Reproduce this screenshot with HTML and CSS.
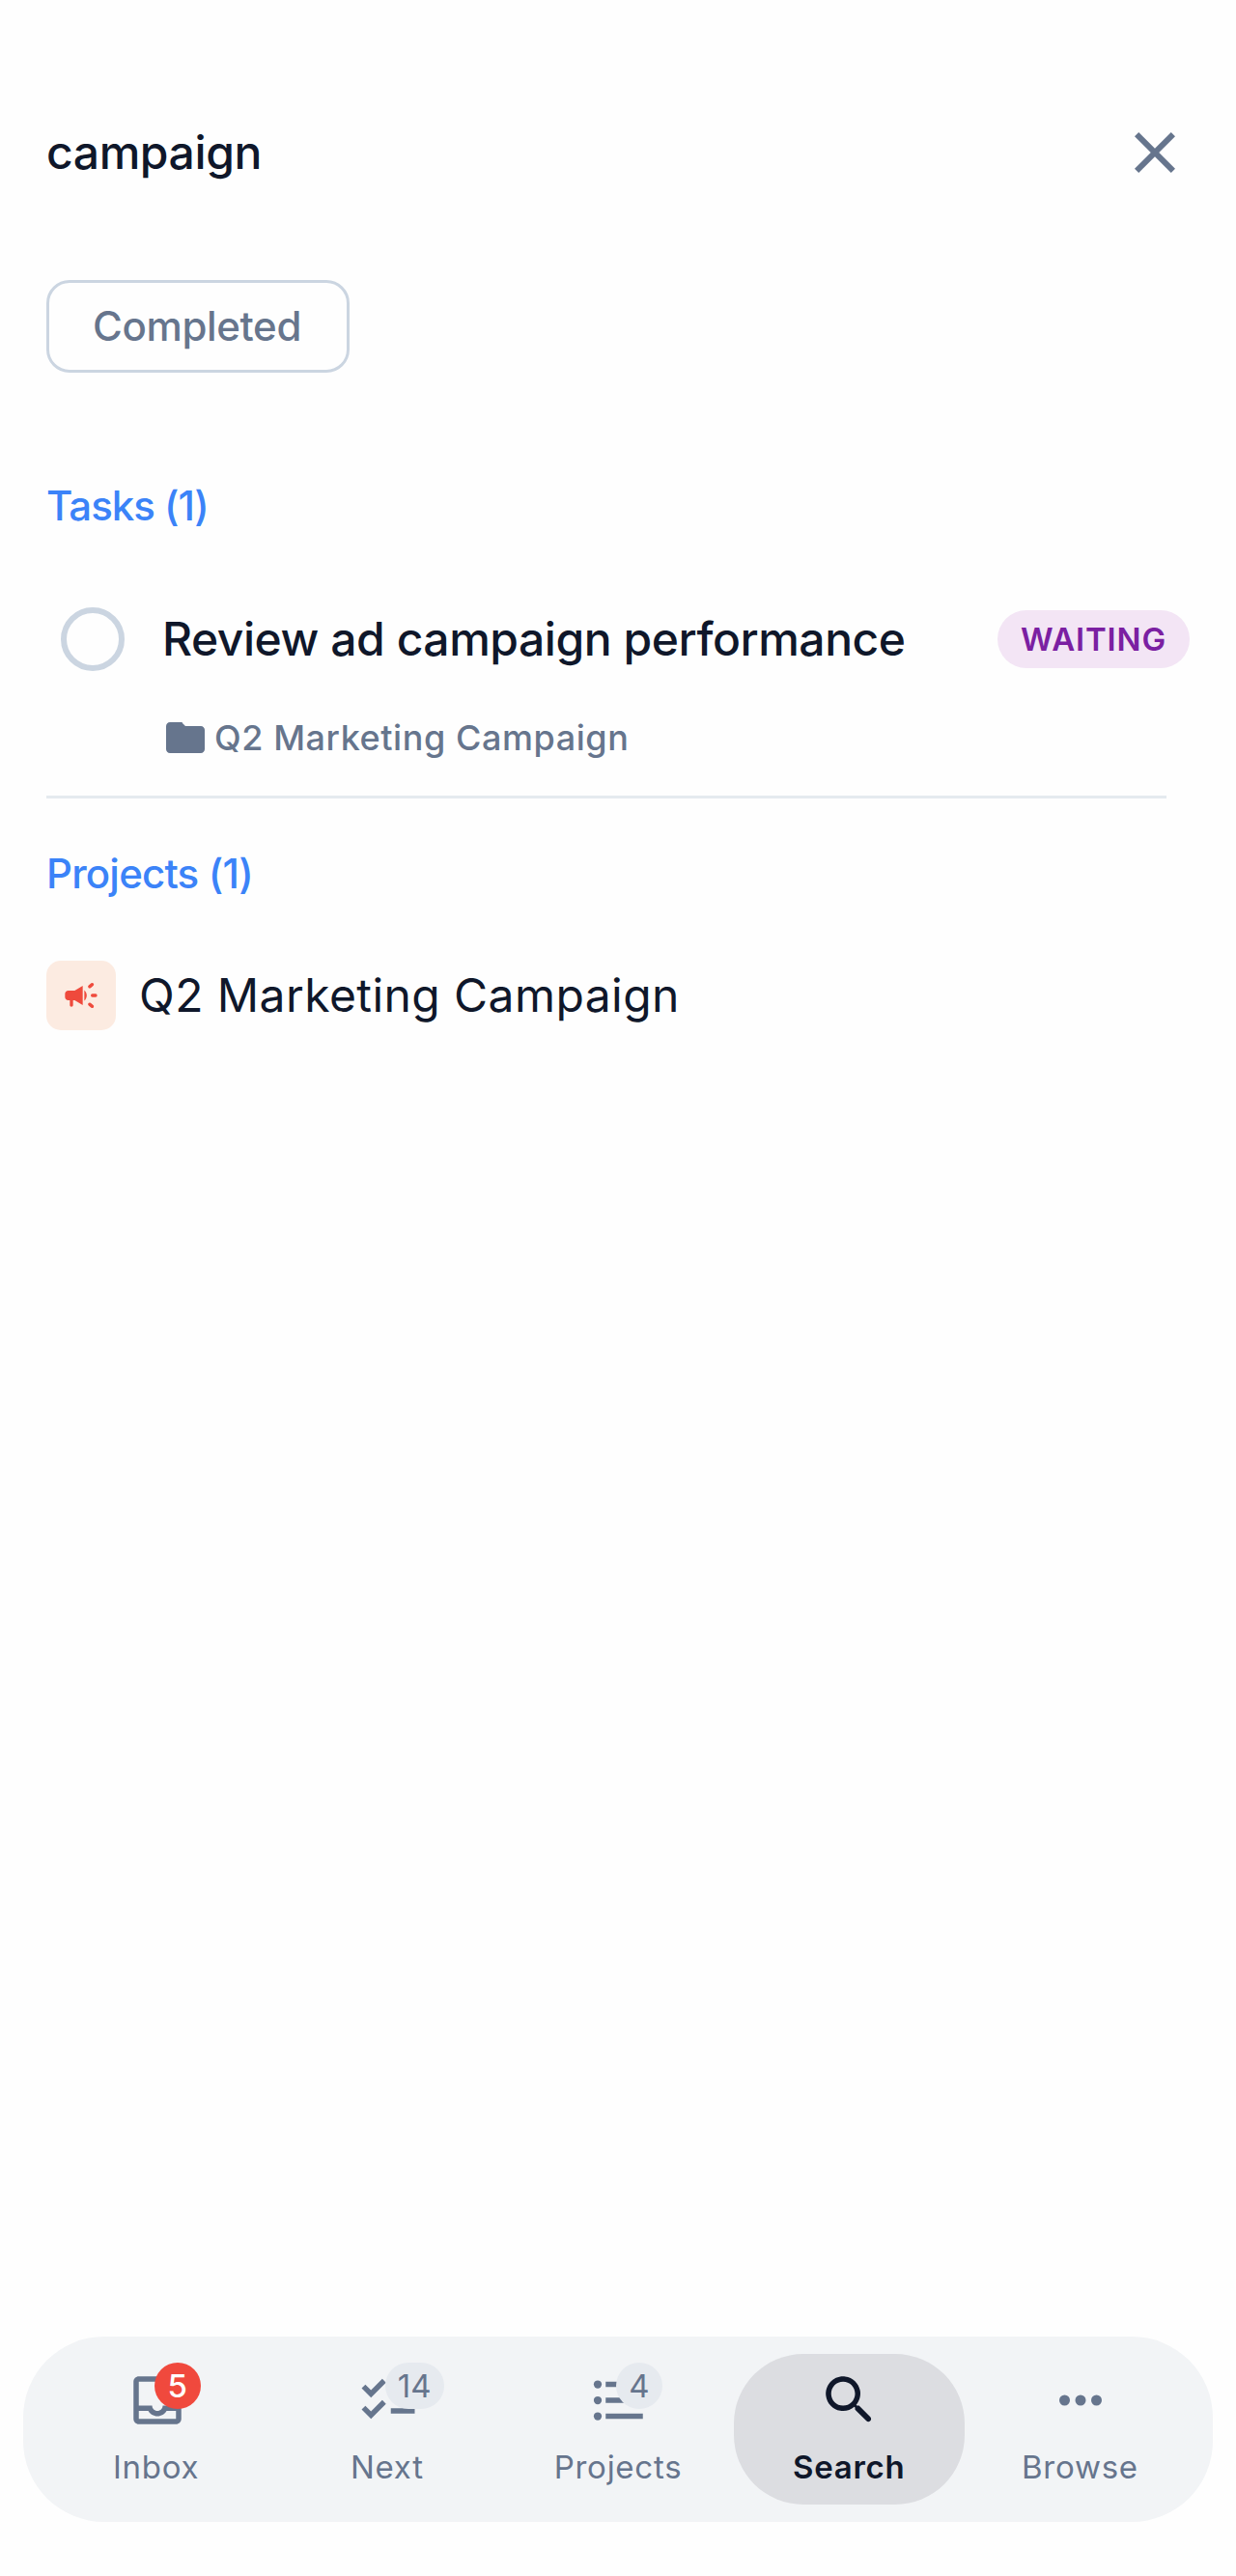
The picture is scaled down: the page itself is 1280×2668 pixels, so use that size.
FILE: index.html
```html
<!DOCTYPE html>
<html lang="en">
<head>
<meta charset="utf-8">
<title>Search</title>
<link rel="stylesheet" href="styles.css">
</head>
<body>
<div class="screen">
  <header class="search-bar">
    <span class="query">campaign</span>
    <svg class="close" viewBox="0 0 24 24"><path d="M19 6.41L17.59 5 12 10.59 6.41 5 5 6.41 10.59 12 5 17.59 6.41 19 12 13.41 17.59 19 19 17.59 13.41 12z"/></svg>
  </header>
  <main class="results">
    <div class="filters"><span class="chip">Completed</span></div>
    <h2 class="heading tasks-heading">Tasks (1)</h2>
    <section class="task">
      <div class="task-row">
        <span class="check"></span>
        <span class="task-title">Review ad campaign performance</span>
        <span class="status">WAITING</span>
      </div>
      <div class="task-meta">
        <svg class="folder" viewBox="0 0 24 24"><path d="M10 4H4c-1.1 0-1.99.9-1.99 2L2 18c0 1.100.9 2 2 2h16c1.100 0 2-.9 2-2V8c0-1.100-.9-2-2-2h-8l-1.400-1.400C10.400 4.200 10.300 4 10 4z"/></svg>
        <span>Q2 Marketing Campaign</span>
      </div>
    </section>
    <h2 class="heading projects-heading">Projects (1)</h2>
    <div class="project">
      <span class="project-icon"><svg class="horn" viewBox="0 0 24 24"><path d="M4 9c-1.100 0-2 .9-2 2v2c0 1.100.9 2 2 2h1v3c0 .55.45 1 1 1s1-.45 1-1v-3h1l5 3V6L8 9H4zM15.500 12c0-1.330-.580-2.530-1.500-3.350v6.690c.920-.810 1.500-2.010 1.500-3.340z"/><path class="rays" d="M19 12h2M17.300 6.500L18.900 5.200M17.300 17.500l1.600 1.300"/></svg></span>
      <span class="project-name">Q2 Marketing Campaign</span>
    </div>
  </main>
  <nav class="tabs">
    <div class="tab">
      <span class="tab-icon"><svg viewBox="0 0 24 24"><path d="M19 3H5c-1.100 0-2 .9-2 2v14c0 1.100.9 2 2 2h14c1.100 0 2-.9 2-2V5c0-1.100-.9-2-2-2zm0 16H5v-3h3.560c.690 1.190 1.970 2 3.450 2s2.750-.810 3.450-2H19v3zm0-5h-4.990c0 1.100-.9 2-2 2s-2-.9-2-2H5V5h14v9z"/></svg><span class="badge alert">5</span></span>
      <span class="label">Inbox</span>
    </div>
    <div class="tab">
      <span class="tab-icon"><svg viewBox="0 0 24 24"><path d="M22 7h-9v2h9V7zM22 15h-9v2h9v-2zM5.540 11L2 7.460l1.410-1.410 2.120 2.120 4.240-4.240 1.410 1.410L5.540 11zM5.540 19L2 15.460l1.410-1.410 2.120 2.120 4.240-4.240 1.410 1.410L5.540 19z"/></svg><span class="badge">14</span></span>
      <span class="label">Next</span>
    </div>
    <div class="tab">
      <span class="tab-icon"><svg viewBox="0 0 24 24"><circle cx="4" cy="6" r="1.5"/><circle cx="4" cy="12" r="1.5"/><circle cx="4" cy="18" r="1.5"/><path d="M7 5h14v2H7zM7 11h14v2H7zM7 17h14v2H7z"/></svg><span class="badge">4</span></span>
      <span class="label">Projects</span>
    </div>
    <div class="tab active">
      <span class="tab-icon"><svg viewBox="0 0 24 24"><path d="M15.500 14h-.790l-.280-.270c1.200-1.400 1.820-3.310 1.480-5.340-.470-2.780-2.790-5-5.590-5.340-4.230-.520-7.790 3.040-7.270 7.270.340 2.800 2.560 5.120 5.340 5.590 2.030.340 3.940-.280 5.340-1.480l.270.280v.790l4.250 4.250c.410.410 1.080.410 1.490 0 .410-.410.410-1.080 0-1.490L15.500 14zm-6 0C7.010 14 5 11.990 5 9.500S7.010 5 9.500 5 14 7.010 14 9.500 11.990 14 9.500 14z"/></svg></span>
      <span class="label">Search</span>
    </div>
    <div class="tab">
      <span class="tab-icon"><svg viewBox="0 0 24 24"><circle cx="6" cy="12" r="2"/><circle cx="12" cy="12" r="2"/><circle cx="18" cy="12" r="2"/></svg></span>
      <span class="label">Browse</span>
    </div>
  </nav>
</div>
</body>
</html>
```
FILE: styles.css
```css
* { box-sizing: border-box; }
body { margin: 0; background: #fefefe; font-family: Inter, "Noto Sans", sans-serif; color: #0f172a; }
svg { display: block; fill: currentColor; flex: none; }
.screen { width: 1280px; height: 2668px; display: flex; flex-direction: column; white-space: nowrap; }
.search-bar { margin-top: 98px; height: 120px; padding: 0 48px; display: flex; align-items: center; justify-content: space-between; }
.query { font-size: 48px; line-height: 60px; font-weight: 500; letter-spacing: -0.4px; }
.close { width: 72px; height: 72px; color: #66758d; }
.results { flex: 1; padding: 72px 48px 0; }
.filters { display: flex; }
.chip { height: 96px; width: 314px; border: 3px solid #cbd5e1; border-radius: 24px; padding-left: 45px; font-size: 42px; line-height: 90px; font-weight: 500; letter-spacing: -0.35px; color: #66758d; }
.heading { margin: 0; font-size: 42px; line-height: 60px; font-weight: 500; color: #3b83f8; }
.tasks-heading { margin-top: 108px; letter-spacing: -1px; }
.task { margin-top: 75px; width: 1160px; height: 198px; border-bottom: 3px solid #e5eaef; }
.task-row { width: 1184px; height: 66px; padding-left: 15px; display: flex; align-items: center; }
.check { width: 66px; height: 66px; border: 6px solid #cbd5e1; border-radius: 50%; }
.task-title { margin-left: 39px; padding-bottom: 2px; font-size: 48px; font-weight: 500; letter-spacing: -0.45px; }
.status { margin-left: auto; width: 199px; height: 60px; padding-left: 24px; border-radius: 30px; background: #f3e5f5; color: #7b1fa2; font-size: 33px; line-height: 60px; font-weight: 600; letter-spacing: 0.8px; }
.task-meta { margin: 45px 0 0 120px; height: 48px; display: flex; align-items: center; gap: 6px; color: #66758d; font-size: 36px; font-weight: 500; letter-spacing: 0.57px; }
.folder { width: 48px; height: 48px; }
.projects-heading { margin-top: 48px; letter-spacing: -0.8px; }
.project { margin-top: 60px; height: 72px; display: flex; align-items: center; gap: 24px; font-size: 48px; letter-spacing: 0.43px; }
.project-name { padding-bottom: 2px; }
.project-icon { width: 72px; height: 72px; border-radius: 15px; background: #fcebe1; color: #ef4a3c; display: flex; align-items: center; justify-content: center; }
.horn { width: 40px; height: 40px; }
.rays { fill: none; stroke: currentColor; stroke-width: 2; stroke-linecap: round; }
.tabs { margin: 0 24px 56px; height: 192px; padding: 18px; border-radius: 84px; background: #f2f4f6; display: flex; color: #66758d; font-size: 33px; }
.tab { flex: 1; height: 156px; padding-top: 15px; border-radius: 72px; display: flex; flex-direction: column; align-items: center; }
.active { background: #dcdde1; color: #0f172a; font-weight: 600; }
.tab-icon { position: relative; width: 66px; height: 66px; margin-left: 2px; }
.badge { position: absolute; left: 30px; top: -6px; min-width: 48px; height: 48px; padding: 0 13px; border-radius: 24px; background: #e6eaef; line-height: 48px; text-align: center; }
.alert { background: #f0493d; color: #fff; font-weight: 500; }
.label { margin-top: 12px; line-height: 48px; letter-spacing: 0.75px; }
```
